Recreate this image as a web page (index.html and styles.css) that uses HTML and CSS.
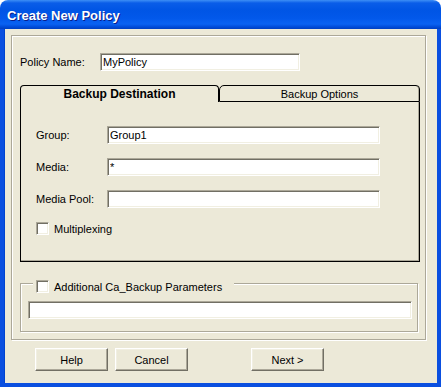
FILE: index.html
```html
<!DOCTYPE html>
<html lang="en">
<head>
  <meta charset="UTF-8">
  <title>Create New Policy</title>
  <link rel="stylesheet" href="styles.css">
</head>
<body>
  <div class="window">
    <div class="titlebar">Create New Policy</div>
    <div class="client">
      <div class="panel">
        <div class="policy-row">
          <label class="policy-label">Policy Name:</label>
          <input class="textbox policy-box" type="text" value="MyPolicy">
        </div>

        <!-- Tabs -->
        <div class="tabs">
          <div class="tab tab-active">Backup Destination</div>
          <div class="tab tab-idle">Backup Options</div>
        </div>
        <div class="tab-page">
          <div class="field-row">
            <label class="field-label">Group:</label>
            <input class="textbox field-box" type="text" value="Group1">
          </div>
          <div class="field-row">
            <label class="field-label">Media:</label>
            <input class="textbox field-box" type="text" value="*">
          </div>
          <div class="field-row">
            <label class="field-label">Media Pool:</label>
            <input class="textbox field-box" type="text" value="">
          </div>
          <div class="check-row"><span class="checkbox"></span>Multiplexing</div>
        </div>

        <!-- Extra params -->
        <div class="group">
          <div class="group-legend"><span class="checkbox"></span>Additional Ca_Backup Parameters</div>
          <input class="textbox params-box" type="text" value="">
        </div>
      </div>

      <div class="buttons">
        <button class="btn">Help</button>
        <button class="btn">Cancel</button>
        <button class="btn btn-next">Next &gt;</button>
      </div>
    </div>
  </div>
</body>
</html>
```

FILE: styles.css
```css
/* Reset & base */
* { margin: 0; padding: 0; box-sizing: border-box; }
body { background: #fff; font-family: 'Liberation Sans', Arial, sans-serif; font-size: 11px; color: #000; }

/* Window frame */
.window { width: 441px; height: 387px; display: flex; flex-direction: column; }
.titlebar {
  height: 29px; padding: 2px 0 0 7px; display: flex; align-items: center;
  border-radius: 8px 8px 0 0;
  background: linear-gradient(#3d8ff6 0, #0a5de8 3px, #0055e5 10px, #0258ea 18px, #0a62f2 24px, #004bd8 27px, #003fc0 29px);
  color: #fff; font-size: 13px; font-weight: bold; text-shadow: 1px 1px 0 #0a1e8a;
}
.client {
  flex: 1; background: #ece9d8; padding: 6px 0 0 7px;
  border: 4px solid #0a4fe0; border-top: 0;
  box-shadow: inset 1px 0 0 #0043d0;
}

/* Etched outer panel */
.panel {
  width: 415px; height: 305px; padding: 17px 0 0 8px;
  border: 1px solid #aca899;
  box-shadow: inset 1px 1px 0 #fff, 1px 1px 0 #fff;
}
.policy-row { display: flex; align-items: center; height: 18px; }
.policy-label { width: 80px; }
.policy-box { width: 200px; }

/* Inputs */
.textbox {
  height: 18px; padding: 0 2px; font: inherit; color: #000; background: #fff; outline: none;
  border: 1px solid; border-color: #aca899 #fff #fff #aca899;
  box-shadow: inset 1px 1px 0 #716f64, inset -1px -1px 0 #f1efe2;
}
.checkbox {
  width: 13px; height: 13px; background: #fff; flex: none;
  border: 1px solid; border-color: #aca899 #fff #fff #aca899;
  box-shadow: inset 1px 1px 0 #716f64, inset -1px -1px 0 #f1efe2;
}

/* Tabs */
.tabs { display: flex; width: 400px; height: 17px; margin-top: 14px; }
.tab { display: flex; align-items: center; justify-content: center; border: 1px solid #000; border-bottom: 0; }
.tab-active { width: 199px; font-size: 12px; font-weight: bold; border-radius: 4px 4px 0 0; }
.tab-idle {
  width: 201px; border-bottom: 1px solid #000;
  border-radius: 5px 4px 0 0; box-shadow: inset -1px 0 0 #aca899;
}
.tab-page {
  width: 400px; height: 160px; padding: 24px 0 0 15px;
  border: 1px solid #000; border-top: 0;
  box-shadow: inset -1px -1px 0 #aca899;
}
.field-row { display: flex; align-items: center; height: 18px; margin-bottom: 14px; }
.field-label { width: 71px; }
.field-box { width: 273px; }
.check-row { display: flex; align-items: center; gap: 5px; height: 13px; margin-top: 1px; }

/* Group box */
.group {
  width: 398px; height: 49px; margin-top: 21px;
  border: 1px solid #aca899;
  box-shadow: inset 1px 1px 0 #fff, 1px 1px 0 #fff;
}
.group-legend {
  display: flex; align-items: center; gap: 5px; width: fit-content; height: 13px;
  margin: -4px 0 0 12px; padding: 0 12px 0 3px; background: #ece9d8;
}
.params-box { display: block; width: 384px; margin: 8px 0 0 7px; }

/* Buttons */
.buttons { display: flex; gap: 7px; margin-top: 8px; padding-left: 24px; }
.btn {
  width: 73px; height: 23px; font: inherit; color: #000; background: #ece9d8;
  border: 1px solid; border-color: #fff #716f64 #716f64 #fff;
  box-shadow: inset -1px -1px 0 #aca899, inset 1px 1px 0 #f1efe2;
}
.btn-next { margin-left: 56px; }
```
